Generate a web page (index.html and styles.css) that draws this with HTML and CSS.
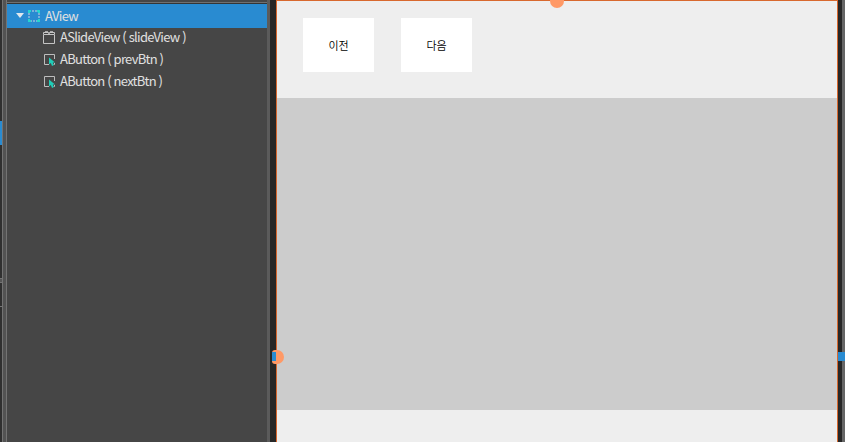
FILE: index.html
```
<!DOCTYPE html>
<html lang="ko">
<head>
<meta charset="utf-8">
<title>AView</title>
<link rel="stylesheet" href="styles.css">
</head>
<body>
<div class="app">
  <div class="edge"><i class="gap-a"></i><i class="mark"></i><i class="gap-b"></i><i class="bar"></i><i class="gap-c"></i><i class="line"></i></div>
  <div class="splitter"></div>
  <div class="tree">
    <div class="row selected">
      <svg class="arrow" width="8" height="5"><path d="M0 0h8L4 5z" fill="#e0e8ed"/></svg>
      <svg class="icon" width="13" height="13"><rect x="1" y="1" width="10" height="10" fill="none" stroke="#91bddd" stroke-width="1.5" stroke-dasharray="2 1"/><path d="M0 0h3v2H2v1H0zM9 0h3v3h-2V2H9zM0 9h2v1h1v2H0zM10 9h2v3H9v-2h1z" fill="#25d6d0"/></svg>
      <span>AView</span>
    </div>
    <div class="row child">
      <svg class="icon" width="13" height="13"><path d="M.5 3.500h11v9H.5zM.5 3V1.500h11V3" fill="none" stroke="#c4c4c4"/><path d="M2 .5h3M7 .5h3M5.500 1v2M6.500 1v2" stroke="#aaa"/></svg>
      <span>ASlideView ( slideView )</span>
    </div>
    <div class="row child">
      <svg class="icon" width="13" height="13"><path d="M6 11.500H1.500v-10h10V6M10.500 11.500h1V10" fill="none" stroke="#bdbdbd"/><path d="M6 4.500v7l1.800-1.400L9 13l1.700-.8L9.800 9.500H12z" fill="#20cdb8"/></svg>
      <span>AButton ( prevBtn )</span>
    </div>
    <div class="row child">
      <svg class="icon" width="13" height="13"><path d="M6 11.500H1.500v-10h10V6M10.500 11.500h1V10" fill="none" stroke="#bdbdbd"/><path d="M6 4.500v7l1.800-1.400L9 13l1.700-.8L9.800 9.500H12z" fill="#20cdb8"/></svg>
      <span>AButton ( nextBtn )</span>
    </div>
  </div>
  <div class="divider"></div>
  <div class="gutter"></div>
  <div class="view">
    <div class="buttons"><div class="btn">이전</div><div class="btn">다음</div></div>
    <div class="slide"></div>
    <i class="handle top"></i>
    <i class="handle left"></i>
    <i class="grip left-grip"></i>
    <i class="grip right-grip"></i>
  </div>
  <div class="gutter right"></div>
  <div class="side"></div>
</div>
</body>
</html>
```
FILE: styles.css
```
* { box-sizing: border-box; }
body { margin: 0; overflow: hidden; }
.app { display: flex; width: 845px; height: 442px; overflow: hidden; background: #464646; font-family: "Noto Sans CJK KR", sans-serif; }
.edge { display: flex; flex-direction: column; width: 2px; background: #303030; }
.gap-a { height: 121px; }
.mark { height: 24px; background: #298bd1; }
.gap-b { height: 133px; }
.bar { height: 5px; background: #555; border: solid #737373; border-width: 1px 0; }
.gap-c { height: 23px; }
.line { height: 1px; background: #777; }
.splitter { width: 5px; background: #535353; border: solid #737373; border-width: 0 1px; }
.tree { width: 260px; border-top: 2px solid #464646; box-shadow: inset 0 1px #707070, inset 0 2px #353535; padding-top: 2px; }
.row { display: flex; align-items: center; height: 22px; color: #e0e0e0; font-size: 13px; letter-spacing: -.7px; word-spacing: -.3px; line-height: 22px; white-space: pre; }
.row.selected { height: 24px; margin-bottom: -2px; padding-left: 9px; background: #298bd1; }
.arrow { margin: -1px 4px 0 0; }
.icon { flex: none; margin-right: 4px; }
.child { padding-left: 36px; }
.divider { width: 3px; background: #5b5b5b; }
.gutter { width: 6px; background: #272727; }
.view { position: relative; width: 562px; background: #eee; border: solid #d8682e; border-width: 1px 1px 0; }
.buttons { display: flex; gap: 27px; height: 97px; padding: 17px 0 0 26px; }
.btn { width: 71px; height: 54px; background: #fff; color: #000; font-size: 11px; font-weight: 350; line-height: 54px; text-align: center; }
.slide { height: 312px; background: #ccc; }
.handle { position: absolute; background: #ff9966; }
.top { left: 273px; top: -1px; width: 14px; height: 8px; border-radius: 0 0 7px 7px; }
.left { left: -5px; top: 349px; width: 12px; height: 14px; border-radius: 3px 7px 7px 3px; }
.grip { position: absolute; background: #298bd1; }
.left-grip { left: -5px; top: 351px; width: 4px; height: 9px; }
.right-grip { left: 561px; top: 351px; width: 7px; height: 9px; z-index: 1; }
.right { width: 4px; }
.side { width: 3px; background: #666; }
```
